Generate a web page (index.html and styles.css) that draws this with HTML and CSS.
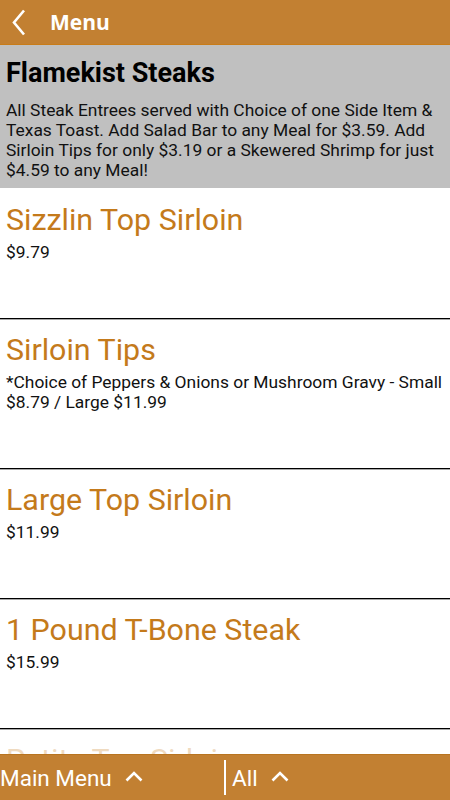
FILE: index.html
```html
<html>
  <head>
    <title>Menu</title>
    <meta name="viewport" content="width=device-width, initial-scale=1">
    <link rel="stylesheet" href="styles.css">
  </head>
  <body>
    <div class="topbar">
      <span class="back">
        <svg width="14" height="27" viewBox="0 0 14 27"><polyline points="12,1.5 2,13.5 12,25.5" fill="none" stroke="#fff" stroke-width="2.6"/></svg>
      </span>
      <span class="topbar-title">Menu</span>
    </div>

    <div class="category">
      <h1>Flamekist Steaks</h1>
      <p>All Steak Entrees served with Choice of one Side Item &amp; Texas Toast. Add Salad Bar to any Meal for $3.59. Add Sirloin Tips for only $3.19 or a Skewered Shrimp for just $4.59 to any Meal!</p>
    </div>

    <div class="items">
      <div class="item">
        <div class="item-name">Sizzlin Top Sirloin</div>
        <div class="item-desc">$9.79</div>
      </div>
      <div class="item tall">
        <div class="item-name">Sirloin Tips</div>
        <div class="item-desc">*Choice of Peppers &amp; Onions or Mushroom Gravy - Small $8.79 / Large $11.99</div>
      </div>
      <div class="item">
        <div class="item-name">Large Top Sirloin</div>
        <div class="item-desc">$11.99</div>
      </div>
      <div class="item">
        <div class="item-name">1 Pound T-Bone Steak</div>
        <div class="item-desc">$15.99</div>
      </div>
      <div class="item">
        <div class="item-name">Petite Top Sirloin</div>
      </div>
    </div>

    <div class="bottombar">
      <div class="tab">Main Menu
        <svg width="18" height="11" viewBox="0 0 18 11"><polyline points="1.5,9.5 9,2 16.5,9.5" fill="none" stroke="#fff" stroke-width="2.6"/></svg>
      </div>
      <div class="divider"></div>
      <div class="tab">All
        <svg width="18" height="11" viewBox="0 0 18 11"><polyline points="1.5,9.5 9,2 16.5,9.5" fill="none" stroke="#fff" stroke-width="2.6"/></svg>
      </div>
    </div>
  </body>
</html>
```

FILE: styles.css
```css
body { margin: 0; font-family: Roboto, "Liberation Sans", sans-serif; background: #fff; overflow: hidden; height: 800px; }

.topbar {
  height: 44px;
  background-color: #c28032;
  border-bottom: 1px solid #c97c18;
  display: flex;
  align-items: center;
}
.back { width: 50px; display: flex; justify-content: flex-start; padding-left: 12px; box-sizing: border-box; }
.back svg { display: block; }
.topbar-title {
  color: #fff;
  font-family: "Open Sans", sans-serif;
  font-weight: bold;
  font-size: 21px;
}

.category {
  background-color: #c0c0c0;
  padding: 13px 4px 8px 6px;
}
.category h1 {
  margin: 0;
  font-size: 27px;
  line-height: 30px;
  font-weight: bold;
  color: #000;
}
.category p {
  margin: 12px 0 0 0;
  font-size: 17.4px;
  line-height: 20px;
  color: #111;
}

.items { height: 567px; overflow: hidden; }
.item {
  padding: 14px 0 0 6px;
  height: 130px;
  box-sizing: border-box;
}
.item + .item {
  padding-top: 13px;
  border-top: 1px solid #000;
  box-shadow: inset 0 1px 0 #a8a8a8;
}
.item.tall { height: 150px; }
.item-name {
  color: #c47a1b;
  font-size: 30.4px;
  line-height: 36px;
}
.item-desc {
  margin-top: 4px;
  font-size: 17.4px;
  line-height: 20px;
  color: #111;
}

.bottombar {
  position: fixed;
  left: 0;
  right: 0;
  bottom: 0;
  height: 45px;
  background-color: #c28032;
  border-top: 1px solid #b87420;
  display: flex;
  align-items: center;
  color: #fff;
  font-size: 22.5px;
}
.bottombar::before {
  content: "";
  position: absolute;
  left: 0;
  right: 0;
  top: -22px;
  height: 21px;
  background: rgba(255, 255, 255, 0.72);
}
.tab { display: flex; align-items: center; gap: 13px; }
.tab:first-child { width: 225px; }
.tab svg { display: block; margin-top: -2px; }
.divider { width: 2px; height: 35px; background: #fff; margin-right: 6px; margin-left: -1px; }
```
